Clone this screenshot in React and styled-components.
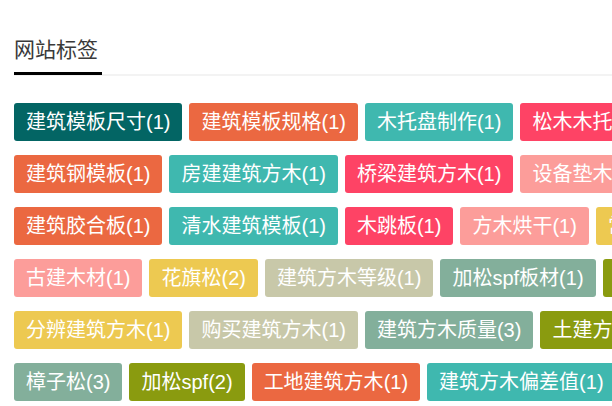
import React from 'react'
import styled, { createGlobalStyle } from 'styled-components'

const GlobalStyle = createGlobalStyle`
  html, body {
    margin: 0;
    padding: 0;
    background: #fff;
    overflow: hidden;
  }
  body {
    font-family: "Liberation Sans", "Noto Sans CJK SC", sans-serif;
  }
`

const colors = {
  teal: '#036564',
  orange: '#EB6841',
  aqua: '#3FB8AF',
  red: '#FE4365',
  pink: '#FC9D9A',
  yellow: '#EDC951',
  beige: '#C8C8A9',
  sage: '#83AF9B',
  olive: '#8A9B0F',
}

const rows = [
  [
    ['建筑模板尺寸', 1, 'teal'],
    ['建筑模板规格', 1, 'orange'],
    ['木托盘制作', 1, 'aqua'],
    ['松木木托盘', 1, 'red'],
  ],
  [
    ['建筑钢模板', 1, 'orange'],
    ['房建建筑方木', 1, 'aqua'],
    ['桥梁建筑方木', 1, 'red'],
    ['设备垫木方', 1, 'pink'],
  ],
  [
    ['建筑胶合板', 1, 'orange'],
    ['清水建筑模板', 1, 'aqua'],
    ['木跳板', 1, 'red'],
    ['方木烘干', 1, 'pink'],
    ['常用方木', 1, 'yellow'],
  ],
  [
    ['古建木材', 1, 'pink'],
    ['花旗松', 2, 'yellow'],
    ['建筑方木等级', 1, 'beige'],
    ['加松spf板材', 1, 'sage'],
    ['松木方', 1, 'olive'],
  ],
  [
    ['分辨建筑方木', 1, 'yellow'],
    ['购买建筑方木', 1, 'beige'],
    ['建筑方木质量', 3, 'sage'],
    ['土建方木', 1, 'olive'],
  ],
  [
    ['樟子松', 3, 'sage'],
    ['加松spf', 2, 'olive'],
    ['工地建筑方木', 1, 'orange'],
    ['建筑方木偏差值', 1, 'aqua'],
    ['辐射松', 1, 'red'],
  ],
]

const Page = styled.div`
  padding: 0 14px;
  width: 1000px;
`

const Header = styled.div`
  padding-top: 34px;
  border-bottom: 2px solid #f3f3f3;
`

const Title = styled.span`
  display: inline-block;
  font-size: 21px;
  line-height: 31px;
  color: #3a3a3a;
  padding: 0 4px 7px 0;
  border-bottom: 3px solid #000;
  margin-bottom: -1px;
`

const TagList = styled.div`
  display: flex;
  flex-direction: column;
  gap: 14px;
  margin-top: 27px;
`

const TagRow = styled.div`
  display: flex;
  flex-wrap: nowrap;
  gap: 7px;
`

const Tag = styled.a`
  flex: none;
  height: 38px;
  line-height: 38px;
  padding: 0 12px;
  border-radius: 3px;
  font-size: 20px;
  color: #fff;
  white-space: nowrap;
  text-decoration: none;
  background: ${p => colors[p.$tone]};
`

export default function App() {
  return (
    <Page>
      <GlobalStyle />
      <Header>
        <Title>网站标签</Title>
      </Header>
      <TagList>
        {rows.map((row, i) => (
          <TagRow key={i}>
            {row.map(([name, count, tone]) => (
              <Tag key={name} href="#" $tone={tone}>
                {name}({count})
              </Tag>
            ))}
          </TagRow>
        ))}
      </TagList>
    </Page>
  )
}
